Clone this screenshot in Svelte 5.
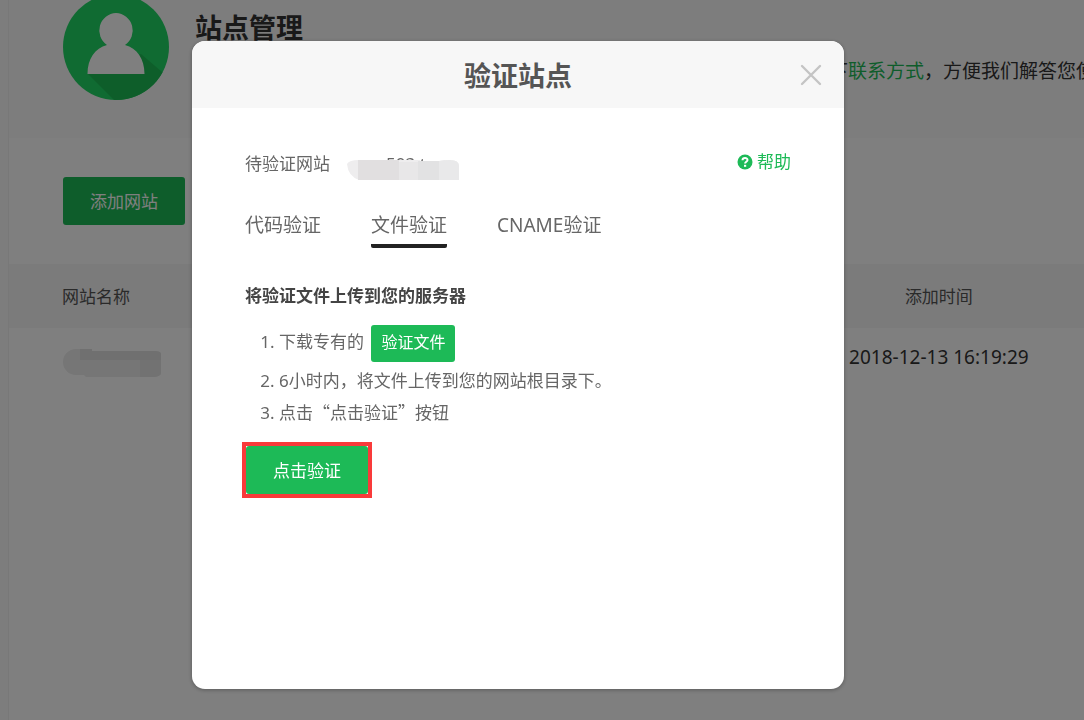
<script>
  let sites = [{ id: 1, added: '2018-12-13 16:19:29' }];
  let tabs = ['代码验证', '文件验证', 'CNAME验证'];
  let active = 1;
  let open = true;
</script>

<main class="page">
  <header class="banner">
    <svg class="avatar" viewBox="0 0 106 106" aria-hidden="true">
      <defs>
        <clipPath id="disc"><circle cx="53" cy="53" r="53" /></clipPath>
      </defs>
      <g clip-path="url(#disc)">
        <rect width="106" height="106" fill="#20d664" />
        <path d="M25 80 L53 108 L106 106 L106 84 L78 60 Z" fill="#1cbc54" />
        <path
          d="M53 19 a17.500 17.500 0 0 1 9 32 c12 3 19.500 14 19.500 29 h-57 c0-15 7.500-26 19.500-29 a17.500 17.500 0 0 1 9-32z"
          fill="#ffffff"
        />
      </g>
    </svg>
    <div class="intro">
      <h1>站点管理</h1>
      <p>下<a href="#contact">联系方式</a>，方便我们解答您使</p>
    </div>
  </header>

  <div class="toolbar">
    <button class="btn large">添加网站</button>
  </div>

  <table>
    <thead>
      <tr>
        <th class="name">网站名称</th>
        <th class="time">添加时间</th>
      </tr>
    </thead>
    <tbody>
      {#each sites as site (site.id)}
        <tr>
          <td class="name">
            <svg class="mask" width="100" height="30" viewBox="0 0 100 30" aria-hidden="true">
              <path d="M14 1 H30 V3 H92 Q99 3 99 6 V25 Q99 28 92 29 H24 L22 27 H14 A13 13 0 0 1 14 1z" fill="#ececec" />
              <path d="M18 1 H30 V3 H92 Q99 3 99 6 V12 H18z" fill="#e0e0e0" />
              <path d="M78 12 H99 V25 Q99 28 92 29 H78z" fill="#e4e4e4" />
            </svg>
          </td>
          <td class="time">{site.added}</td>
        </tr>
      {/each}
    </tbody>
  </table>
</main>

{#if open}
  <div class="overlay">
    <div class="modal" role="dialog" aria-modal="true" aria-labelledby="modal-title">
      <div class="modal-header">
        <h2 id="modal-title">验证站点</h2>
        <button class="close" aria-label="关闭" on:click={() => (open = false)}>
          <svg width="22" height="22" viewBox="0 0 22 22" aria-hidden="true">
            <path d="M2 2 L20 20 M20 2 L2 20" stroke="#c4c4c4" stroke-width="2.400" stroke-linecap="round" />
          </svg>
        </button>
      </div>

      <div class="modal-body">
        <div class="site">
          <span>待验证网站</span>
          <span class="domain">
            <span class="domain-text">503.t</span>
            <svg class="domain-mask" width="114" height="28" viewBox="0 0 114 28" aria-hidden="true">
              <path d="M1 10 Q3 6 13 6 H74 V7 H93 Q97 6 104 6 Q113 6 113 12 V26 H13 Q2 22 1 10z" fill="#eeedee" />
              <path d="M12 6 H53 V26 H12z" fill="#e1dfe0" />
              <path d="M53 8 H72 V26 H53z" fill="#e8e7e8" />
              <path d="M72 7 H93 V26 H72z" fill="#e2e2e3" />
              <path d="M93 7 Q97 6 104 6 Q113 6 113 12 V26 H93z" fill="#e9e9ea" />
            </svg>
          </span>
          <a class="help" href="#help">
            <svg width="16" height="16" viewBox="0 0 16 16" aria-hidden="true">
              <circle cx="8" cy="8" r="7.500" fill="#1dba57" />
              <path d="M5.500 6.200 C5.600 3.200 10.500 3.200 10.500 6 C10.500 7.800 8.100 7.800 8.100 9.600" fill="none" stroke="#fff" stroke-width="2" />
              <rect x="7" y="10.800" width="2.200" height="2" fill="#fff" />
            </svg>
            帮助
          </a>
        </div>

        <div class="tabs" role="tablist">
          {#each tabs as tab, i}
            <button role="tab" class="tab" class:active={i === active} aria-selected={i === active} on:click={() => (active = i)}>{tab}</button>
          {/each}
        </div>

        <h3>将验证文件上传到您的服务器</h3>
        <ol>
          <li>下载专有的 <button class="btn small">验证文件</button></li>
          <li>6小时内，将文件上传到您的网站根目录下。</li>
          <li>点击<span class="quoted">“点击验证”</span>按钮</li>
        </ol>

        <div class="highlight">
          <button class="btn large">点击验证</button>
        </div>
      </div>
    </div>
  </div>
{/if}

<style>
  :global(body) {
    margin: 0;
    background: #fafafa;
    color: #333;
    font-family: 'Noto Sans', 'Noto Sans CJK SC', sans-serif;
    font-size: 17px;
    overflow: hidden;
  }

  a {
    color: #1dba57;
    text-decoration: none;
  }

  button {
    font: inherit;
    border: none;
    cursor: pointer;
  }

  .page {
    min-height: 100vh;
    margin-left: 8px;
    border-left: 1px solid #f0f0f0;
    background: #fff;
    box-sizing: border-box;
  }

  .banner {
    display: flex;
    height: 138px;
    padding-left: 54px;
    background: #fafafa;
  }

  .avatar {
    flex: none;
    width: 106px;
    height: 106px;
    margin-top: -6px;
  }

  .intro {
    flex: 1;
    min-width: 0;
    padding: 8px 0 0 26px;
  }

  h1 {
    margin: 0;
    font-size: 27px;
    line-height: 40px;
    color: #333;
  }

  .intro p {
    margin: 8px 0 0;
    padding-left: 634px;
    font-size: 19px;
    line-height: 30px;
    white-space: nowrap;
    overflow: hidden;
  }

  .toolbar {
    padding: 39px 54px;
  }

  .btn {
    background: #1dba57;
    color: #fff;
    border-radius: 3px;
  }

  .btn.large {
    display: block;
    height: 48px;
    padding: 0 27px 2px;
  }

  .btn.small {
    height: 37px;
    margin-left: 3px;
    padding: 0 10px 2px;
    font-size: 16px;
    vertical-align: middle;
  }

  table {
    width: 100%;
    border-collapse: collapse;
  }

  th {
    height: 62px;
    padding: 0 0 2px;
    background: #f7f7f7;
    font-weight: normal;
    color: #555;
  }

  td {
    height: 58px;
    padding: 0 0 2px;
    font-size: 19px;
  }

  .name {
    padding-left: 53px;
    text-align: left;
  }

  .time {
    width: 27%;
    text-align: center;
  }

  .mask {
    display: block;
    margin-top: 12px;
  }

  .overlay {
    position: fixed;
    inset: 0;
    display: flex;
    padding: 41px 240px 31px 192px;
    background: rgba(0, 0, 0, 0.5);
  }

  .modal {
    flex: 1;
    background: #fff;
    border-radius: 13px;
    overflow: hidden;
    box-shadow: 0 1px 4px rgba(0, 0, 0, 0.3);
  }

  .modal-header {
    position: relative;
    padding: 15px 0 12px;
    background: #f7f7f7;
    text-align: center;
  }

  h2 {
    margin: 0;
    font-size: 27px;
    line-height: 40px;
    color: #555;
  }

  .close {
    position: absolute;
    top: 23px;
    right: 22px;
    padding: 0;
    background: none;
    line-height: 0;
  }

  .modal-body {
    padding: 40px 53px;
    color: #666;
  }

  .site {
    display: flex;
    gap: 16px;
    line-height: 32px;
  }

  .domain {
    position: relative;
    width: 114px;
  }

  .domain-text {
    padding-left: 40px;
  }

  .domain-mask {
    position: absolute;
    left: 0;
    top: 6px;
  }

  .help {
    display: flex;
    align-items: center;
    gap: 4px;
    margin-left: auto;
    line-height: 28px;
    align-self: flex-start;
  }

  .tabs {
    display: flex;
    gap: 50px;
    margin-top: 28px;
  }

  .tab {
    padding: 0 0 2px;
    background: none;
    color: #666;
    font-size: 19px;
    line-height: 34px;
    border-bottom: 4px solid transparent;
    border-radius: 2px;
  }

  .tab.active {
    border-bottom-color: #222;
  }

  h3 {
    margin: 31px 0 12px;
    font-size: 17px;
    line-height: 34px;
    color: #444;
  }

  ol {
    margin: 0 0 14px;
    padding-left: 34px;
    line-height: 31px;
  }

  li:first-child {
    margin-bottom: 3px;
  }

  .quoted {
    font-family: 'Noto Sans CJK SC', sans-serif;
  }

  .highlight {
    width: fit-content;
    margin-left: -3px;
    border: 4px solid #f93a3a;
  }
</style>
